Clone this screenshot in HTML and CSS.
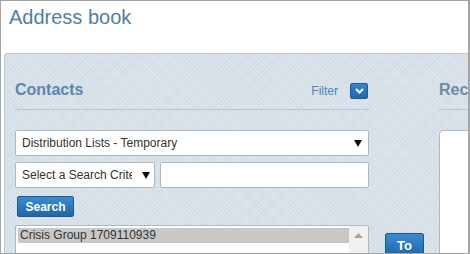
FILE: index.html
```html
<!DOCTYPE html>
<html>
<head>
  <title>Address book</title>
  <link rel="stylesheet" href="styles.css">
</head>
<body>
  <div class="frame">
    <h1 class="title">Address book</h1>
    <div class="panel">
      <div class="contacts">
        <div class="section-head">
          <span class="section-title">Contacts</span>
          <span class="filter">Filter</span>
          <span class="filter-btn">
            <svg width="9" height="6" viewBox="0 0 9 6"><path d="M1 1 L4.5 4.5 L8 1" fill="none" stroke="#fff" stroke-width="2"/></svg>
          </span>
        </div>
        <div class="field select wide">
          <span class="field-text">Distribution Lists - Temporary</span>
          <svg class="arrow" width="8" height="7" viewBox="0 0 8 7"><path d="M0 0 H8 L4 7 Z" fill="#111"/></svg>
        </div>
        <div class="row">
          <div class="field select narrow">
            <span class="field-text">Select a Search Criteria</span>
            <svg class="arrow" width="8" height="7" viewBox="0 0 8 7"><path d="M0 0 H8 L4 7 Z" fill="#111"/></svg>
          </div>
          <div class="field input"></div>
        </div>
        <button class="btn search">Search</button>
        <div class="listbox">
          <div class="list-items">
            <div class="item selected">Crisis Group 1709110939</div>
          </div>
          <div class="scrollbar">
            <svg width="9" height="5" viewBox="0 0 9 5"><path d="M0 5 L4.5 0 L9 5 Z" fill="#a3a3a3"/></svg>
          </div>
        </div>
      </div>
      <div class="actions">
        <button class="btn to">To</button>
      </div>
      <div class="recipients">
        <div class="section-head">
          <span class="section-title muted">Recipients</span>
        </div>
        <div class="recipient-box"></div>
      </div>
    </div>
  </div>
</body>
</html>
```

FILE: styles.css
```css
body {
  margin: 0;
  font-family: "Liberation Sans", Arial, sans-serif;
  color: #333;
}
.frame {
  width: 470px;
  height: 254px;
  box-sizing: border-box;
  border: 1px solid #a4a4a4;
  border-right-width: 2px;
  overflow: hidden;
  background: #fff;
}
.title {
  margin: 5px 0 0 8px;
  font-size: 20px;
  line-height: 23px;
  font-weight: normal;
  color: #4d7ea6;
}
.panel {
  display: flex;
  margin: 24px 0 0 3px;
  width: 640px;
  height: 220px;
  padding-left: 10px;
  border-top: 1px solid #b7c9d7;
  border-left: 1px solid #b7c9d7;
  border-top-left-radius: 4px;
  background-color: #d8e0e8;
  background-image:
    repeating-linear-gradient(45deg, rgba(255,255,255,0.18) 0 1px, transparent 1px 3px),
    repeating-linear-gradient(-45deg, rgba(170,185,200,0.12) 0 1px, transparent 1px 3px);
}
.contacts {
  width: 354px;
  flex-shrink: 0;
}
.section-head {
  display: flex;
  align-items: center;
  padding: 26px 0 9px;
  height: 20px;
  border-bottom: 1px solid #b3c6d6;
}
.section-title {
  flex: 1;
  font-size: 16px;
  font-weight: bold;
  color: #5788b0;
}
.section-title.muted {
  color: #6a8dab;
}
.filter {
  font-size: 12px;
  color: #4a86c4;
  margin-right: 12px;
  padding-top: 2px;
}
.filter-btn {
  width: 16px;
  height: 14px;
  margin-right: 1px;
  margin-top: 1px;
  display: flex;
  align-items: center;
  justify-content: center;
  background: linear-gradient(#3584cc, #1f68ae);
  border: 1px solid #1b5a93;
  border-radius: 2px;
}
.field {
  box-sizing: border-box;
  height: 26px;
  background: #fff;
  border: 1px solid #a8bbca;
  border-radius: 2px;
  display: flex;
  align-items: center;
  font-size: 12px;
  color: #333;
}
.field-text {
  flex: 1;
  white-space: nowrap;
  overflow: hidden;
  padding-left: 6px;
}
.arrow {
  flex-shrink: 0;
  margin: 1px 6px 0 6px;
}
.wide {
  margin-top: 20px;
  width: 354px;
}
.row {
  display: flex;
  gap: 5px;
  margin-top: 6px;
}
.narrow {
  width: 140px;
}
.narrow .field-text {
  flex: none;
  width: 110px;
}
.narrow .arrow {
  margin: 1px 6px 0 10px;
}
.input {
  width: 209px;
}
.btn {
  display: block;
  font-family: "Liberation Sans", Arial, sans-serif;
  font-weight: bold;
  color: #fff;
  background: linear-gradient(#3b8cd2, #1e65aa);
  border: 1px solid #1a5890;
  border-radius: 2px;
  padding: 0;
  cursor: pointer;
}
.search {
  margin: 8px 0 0 2px;
  width: 57px;
  height: 21px;
  font-size: 12px;
}
.listbox {
  display: flex;
  margin-top: 8px;
  height: 40px;
  background: #fff;
  border: 1px solid #a8bbca;
  border-radius: 2px;
}
.list-items {
  flex: 1;
  padding: 2px 0 0 2px;
}
.item {
  height: 15px;
  line-height: 15px;
  font-size: 12px;
  padding-left: 2px;
  color: #333;
}
.item.selected {
  background: #c8c8c8;
}
.scrollbar {
  width: 19px;
  background: #f1f1f1;
  display: flex;
  justify-content: center;
  padding-top: 7px;
  box-sizing: border-box;
}
.actions {
  width: 70px;
  flex-shrink: 0;
  padding: 179px 0 0 16px;
  box-sizing: border-box;
}
.to {
  width: 39px;
  height: 24px;
  font-size: 13px;
}
.recipients {
  width: 200px;
}
.recipient-box {
  margin-top: 20px;
  height: 130px;
  background: #fff;
  border: 1px solid #a8bbca;
  border-top-left-radius: 4px;
}
```
